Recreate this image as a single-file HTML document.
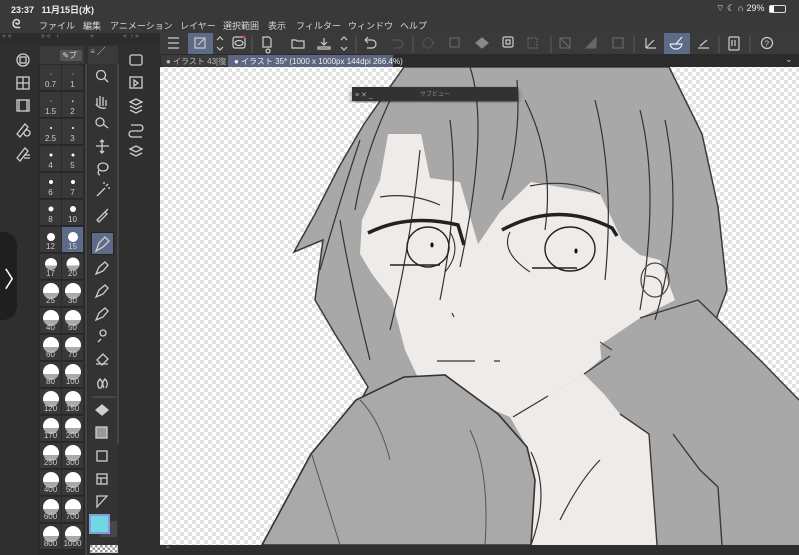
<!DOCTYPE html>
<html><head><meta charset="utf-8"><style>
*{margin:0;padding:0;box-sizing:border-box}
body{width:799px;height:555px;overflow:hidden;background:#2f2f2f;font-family:"Liberation Sans","Noto Sans CJK JP",sans-serif;color:#ddd;position:relative}
.a{position:absolute}
#status{left:0;top:0;width:799px;height:17px;background:#393939;font-size:9px;color:#eee}
#menu{left:0;top:17px;width:799px;height:16px;background:#393939;font-size:9px;color:#d8d8d8}
#menu span{position:absolute;top:2px}
#tb{left:160px;top:33px;width:639px;height:21px;background:#3a3a3a}
#tabs{left:160px;top:54px;width:639px;height:13px;background:#2b2b2b;font-size:8px}
.ph{top:33px;height:12px;background:#2c2c2c;font-size:7px;color:#888}
.r{position:absolute;left:40px;width:44px;height:27px;display:flex}
.c{position:relative;width:21px;height:26px;background:#383838;margin-right:1px;border-bottom:1px solid #262626}
.c i{position:absolute;left:50%;top:9px;transform:translate(-50%,-50%);background:#fff;border-radius:50%}
.c i.L{top:10px;background:linear-gradient(#fff 62%,#a9a9a9 62%)}
.c b{position:absolute;left:0;right:0;bottom:1px;text-align:center;font-size:8px;font-weight:normal;color:#ccc}
.sel{background:#5d6a88}
.ic{position:absolute;stroke:#cfcfcf;fill:none;stroke-width:1.3}
</style></head><body>

<div id="status" class="a">
<span class="a" style="left:11px;top:3px;font-weight:bold">23:37&nbsp;&nbsp;&nbsp;11月15日(水)</span>
<span class="a" style="left:716px;top:3px">⌔ ☾ ∩ 29%</span>
<div class="a" style="left:769px;top:5px;width:17px;height:8px;border:1px solid #ddd;border-radius:2px"><div style="width:4px;height:6px;background:#fff"></div></div>
</div>
<div id="menu" class="a">
<span style="left:12px;top:0;font-size:12px;font-weight:bold">ᘓ</span>
<span style="left:39px">ファイル</span><span style="left:83px">編集</span><span style="left:110px">アニメーション</span><span style="left:180px">レイヤー</span><span style="left:223px">選択範囲</span><span style="left:268px">表示</span><span style="left:296px">フィルター</span><span style="left:348px">ウィンドウ</span><span style="left:400px">ヘルプ</span>
</div>

<div class="a ph" style="left:0;width:38px">&nbsp;» «</div>
<div class="a ph" style="left:39px;width:48px">&nbsp;» «&nbsp;&nbsp;&nbsp;‹</div>
<div class="a ph" style="left:88px;width:32px">&nbsp;«</div>
<div class="a ph" style="left:121px;width:39px">&nbsp;«&nbsp;&nbsp;› »</div>
<div class="a" style="left:40px;top:46px;width:44px;height:18px;background:#3a3a3a"></div>
<div class="a" style="left:60px;top:50px;width:22px;height:11px;background:#555;font-size:8px;color:#ddd">&nbsp;✎ブ</div>
<div class="a" style="left:88px;top:46px;width:30px;height:18px;background:#3a3a3a;font-size:8px;color:#aaa">&nbsp;≡ <span style="color:#ddd">╱</span></div>

<svg class="ic" style="left:0;top:46px" width="38" height="120" viewBox="0 46 38 120">
<circle cx="23" cy="60" r="6"/><rect x="20" y="57" width="6" height="6"/>
<rect x="17" y="77" width="12" height="12"/><path d="M17 83h12M23 77v12"/>
<rect x="17" y="100" width="12" height="11"/><path d="M19 100v11M27 100v11"/>
<path d="M17 134l8-10 3 3-8 10zM24 133a3 3 0 1 0 6 0a3 3 0 1 0-6 0"/>
<path d="M17 158l8-10 3 3-8 10zM24 155h6M24 158h6"/>
</svg>
<div class="a" style="left:121px;top:46px;width:31px;height:509px;background:#2f2f2f"></div>
<svg class="ic" style="left:121px;top:46px" width="31" height="120" viewBox="121 46 31 120">
<rect x="130" y="55" width="12" height="10" rx="2"/>
<rect x="130" y="77" width="12" height="11"/><path d="M134 80l4 3-4 3z"/>
<path d="M130 102l6-3 6 3-6 3zM130 106l6 3 6-3M130 110l6 3 6-3"/>
<path d="M131 125h9a3 3 0 0 1 0 6h-8a3 3 0 0 0 0 6h10"/>
<path d="M130 149l6-3 6 3-6 3zM130 153l6 3 6-3"/>
</svg>

<div class="a" style="left:39px;top:64px;width:46px;height:491px;background:#2a2a2a"></div>
<div class="a" style="left:85px;top:64px;width:2px;height:491px;background:#444"></div>
<div class="r" style="top:65px"><div class="c"><i style="width:1px;height:1px"></i><b>0.7</b></div><div class="c"><i style="width:1px;height:1px"></i><b>1</b></div></div>
<div class="r" style="top:92px"><div class="c"><i style="width:1px;height:1px"></i><b>1.5</b></div><div class="c"><i style="width:1.5px;height:1.5px"></i><b>2</b></div></div>
<div class="r" style="top:119px"><div class="c"><i style="width:2px;height:2px"></i><b>2.5</b></div><div class="c"><i style="width:2px;height:2px"></i><b>3</b></div></div>
<div class="r" style="top:146px"><div class="c"><i style="width:3px;height:3px"></i><b>4</b></div><div class="c"><i style="width:3px;height:3px"></i><b>5</b></div></div>
<div class="r" style="top:173px"><div class="c"><i style="width:4px;height:4px"></i><b>6</b></div><div class="c"><i style="width:4px;height:4px"></i><b>7</b></div></div>
<div class="r" style="top:200px"><div class="c"><i style="width:5px;height:5px"></i><b>8</b></div><div class="c"><i style="width:6px;height:6px"></i><b>10</b></div></div>
<div class="r" style="top:227px"><div class="c"><i style="width:8px;height:8px;top:10px"></i><b>12</b></div><div class="c sel"><i style="width:10px;height:10px;top:10px"></i><b>15</b></div></div>
<div class="r" style="top:254px"><div class="c"><i class="L" style="width:12px;height:12px"></i><b>17</b></div><div class="c"><i class="L" style="width:13px;height:13px"></i><b>20</b></div></div>
<div class="r" style="top:281px"><div class="c"><i class="L" style="width:16px;height:16px"></i><b>25</b></div><div class="c"><i class="L" style="width:16px;height:16px"></i><b>30</b></div></div>
<div class="r" style="top:308px"><div class="c"><i class="L" style="width:16px;height:16px"></i><b>40</b></div><div class="c"><i class="L" style="width:16px;height:16px"></i><b>50</b></div></div>
<div class="r" style="top:335px"><div class="c"><i class="L" style="width:16px;height:16px"></i><b>60</b></div><div class="c"><i class="L" style="width:16px;height:16px"></i><b>70</b></div></div>
<div class="r" style="top:362px"><div class="c"><i class="L" style="width:16px;height:16px"></i><b>80</b></div><div class="c"><i class="L" style="width:16px;height:16px"></i><b>100</b></div></div>
<div class="r" style="top:389px"><div class="c"><i class="L" style="width:16px;height:16px"></i><b>120</b></div><div class="c"><i class="L" style="width:16px;height:16px"></i><b>150</b></div></div>
<div class="r" style="top:416px"><div class="c"><i class="L" style="width:16px;height:16px"></i><b>170</b></div><div class="c"><i class="L" style="width:16px;height:16px"></i><b>200</b></div></div>
<div class="r" style="top:443px"><div class="c"><i class="L" style="width:16px;height:16px"></i><b>250</b></div><div class="c"><i class="L" style="width:16px;height:16px"></i><b>300</b></div></div>
<div class="r" style="top:470px"><div class="c"><i class="L" style="width:16px;height:16px"></i><b>400</b></div><div class="c"><i class="L" style="width:16px;height:16px"></i><b>500</b></div></div>
<div class="r" style="top:497px"><div class="c"><i class="L" style="width:16px;height:16px"></i><b>600</b></div><div class="c"><i class="L" style="width:16px;height:16px"></i><b>700</b></div></div>
<div class="r" style="top:524px"><div class="c"><i class="L" style="width:16px;height:16px"></i><b>800</b></div><div class="c"><i class="L" style="width:16px;height:16px"></i><b>1000</b></div></div>

<div class="a" style="left:88px;top:64px;width:30px;height:491px;background:#333"></div>
<div class="a" style="left:117px;top:64px;width:2px;height:380px;background:#444"></div>
<div class="a" style="left:91px;top:232px;width:23px;height:23px;background:#5d6a88;border:1px solid #222"></div>
<svg class="ic" style="left:88px;top:64px" width="30" height="491" viewBox="88 64 30 491">
<circle cx="101" cy="75" r="4.5"/><path d="M104 78l4 4"/>
<path d="M97 106v-8M100 106v-10M103 106v-9M106 106v-6M96 104q3 5 10 4"/>
<circle cx="100" cy="122" r="4"/><path d="M103 124l5 4"/>
<path d="M102 140v13M96 146h13M100 142l2-2 2 2M100 151l2 2 2-2"/>
<ellipse cx="103" cy="167" rx="5" ry="4"/><path d="M99 170q-2 4 1 5"/>
<path d="M97 196l8-8M106 186l2-2M108 188l2 0M104 184v-2"/>
<path d="M97 220l8-8 2 2-8 8zM105 212l3-3"/>
<path d="M96 251l3-8 6-6 4 4-6 6z"/>
<path d="M96 274l3-7 6-5 3 3-5 6z"/>
<path d="M96 297l3-7 6-5 3 3-5 6z"/>
<path d="M96 320l3-7 6-5 3 3-5 6z"/>
<circle cx="103" cy="333" r="3"/><path d="M98 342l3-3"/>
<path d="M97 360l6-6 5 5-6 6zM96 364h12"/>
<path d="M99 388q-3-5 1-9 4 4 1 9zM104 388q-3-5 1-9 4 4 1 9"/>
<path d="M92 397h24" stroke="#555"/>
<path d="M96 410l6-5 6 5-6 5z" fill="#cfcfcf"/>
<rect x="96" y="427" width="11" height="11" fill="#999"/>
<rect x="97" y="451" width="10" height="10"/>
<rect x="97" y="474" width="10" height="10"/><path d="M97 478h10M101 478v6"/>
<path d="M97 507v-11l10 0z"/>
</svg>
<div class="a" style="left:100px;top:521px;width:17px;height:16px;background:#4a4550"></div>
<div class="a" style="left:89px;top:514px;width:21px;height:20px;background:#6fd8e4;border:2px solid #8a9ad8"></div>
<div class="a" style="left:90px;top:545px;width:28px;height:8px;background:repeating-conic-gradient(#fff 0 25%,#999 0 50%) 0 0/5px 5px"></div>

<div class="a" style="left:0;top:232px;width:17px;height:88px;background:#1f1f1f;border-radius:0 14px 14px 0"></div>
<div class="a" style="left:4px;top:262px;font-size:22px;color:#fff">〉</div>

<div id="tb" class="a"></div>
<div class="a" style="left:188px;top:33px;width:25px;height:21px;background:#5d6a88"></div>
<div class="a" style="left:664px;top:33px;width:26px;height:21px;background:#5d6a88"></div>
<svg class="a" style="left:160px;top:33px;stroke:#ccc;fill:none;stroke-width:1.2" width="639" height="21" viewBox="160 33 639 21">
<path d="M168 38h11M168 43h11M168 48h11"/>
<rect x="195" y="38" width="10" height="10"/><path d="M198 45l6-6"/>
<path d="M217 40l3-3 3 3M217 47l3 3 3-3"/>
<rect x="233" y="37" width="12" height="11" rx="2"/><ellipse cx="239" cy="43" rx="4" ry="2.5"/><circle cx="244" cy="37" r="1.5" fill="#e33" stroke="none"/>
<path d="M252 36v17M356 36v17M413 36v17M551 36v17M634 36v17M719 36v17M750 36v17" stroke="#555"/>
<path d="M263 37h6l2 2v8h-8zM268 49a2 2 0 1 0 0.1 0"/>
<path d="M292 40h4l1 1h7v7h-12z"/>
<path d="M318 47h12v2h-12zM324 38v7M321 42l3 3 3-3"/>
<path d="M341 40l3-3 3 3M341 47l3 3 3-3"/>
<path d="M365 40h7a4 4 0 0 1 0 8h-5M365 40l3-3M365 40l3 3"/>
<path d="M392 40h7a4 4 0 0 1 0 8h-5" stroke="#555"/>
<circle cx="428" cy="43" r="5" stroke="#666" stroke-dasharray="1.5 1.5"/>
<rect x="450" y="38" width="9" height="9" stroke="#666"/>
<path d="M476 43l6-5 6 5-6 5z" fill="#888" stroke="#888"/>
<rect x="503" y="37" width="10" height="10" rx="1.5"/><rect x="506" y="40" width="4" height="4"/>
<rect x="528" y="38" width="9" height="10" stroke="#666" stroke-dasharray="2 1"/>
<rect x="560" y="38" width="10" height="10" stroke="#666"/><path d="M560 38l10 10" stroke="#666"/>
<path d="M586 48l10-10v10z" fill="#666" stroke="#666"/>
<rect x="613" y="38" width="10" height="10" stroke="#666"/>
<path d="M646 48h10M646 48v-10M646 48l8-8"/>
<path d="M670 44h12q-1 5-6 5t-6-5M676 44l6-7" stroke="#eee"/>
<path d="M698 48h11M700 46l7-6"/>
<rect x="729" y="37" width="10" height="13" rx="1"/><path d="M732 40v6M735 40v6"/>
<circle cx="767" cy="43" r="5.5"/><text x="764.5" y="46.5" font-size="8" fill="#ccc" stroke="none">?</text>
</svg>

<div id="tabs" class="a">
<div class="a" style="left:1px;top:1px;width:67px;height:12px;background:#3c3c3c;color:#bbb;padding:1px 0 0 5px;white-space:nowrap;overflow:hidden">● イラスト 43[復</div>
<div class="a" style="left:68px;top:1px;width:165px;height:12px;background:#5d6680;color:#eee;padding:1px 0 0 6px;white-space:nowrap">● イラスト 35* (1000 x 1000px 144dpi 266.4%)</div>
<div class="a" style="left:625px;top:0;color:#ccc;font-size:9px">⌄</div>
</div>

<svg class="a" style="left:160px;top:67px" width="639" height="478" viewBox="160 67 639 478">
<defs><pattern id="ck" width="8" height="8" patternUnits="userSpaceOnUse"><rect width="8" height="8" fill="#fff"/><rect width="4" height="4" fill="#e2e2e2"/><rect x="4" y="4" width="4" height="4" fill="#e2e2e2"/></pattern>
<filter id="sh"><feDropShadow dx="0" dy="3" stdDeviation="3" flood-opacity="0.5"/></filter></defs>
<rect x="160" y="67" width="639" height="478" fill="url(#ck)"/>
<path d="M404 67L669 67L702 134L718 207L727 290L712 330L799 400L799 545L262 545L356 410L368 387L356 367L335 334L315 300L323 240L294 252L315 214L339 167L364 124Z" fill="#a8a8a8" stroke="#3a3a3a" stroke-width="1.5"/>
<path d="M388 134L421 134L430 178L460 182L478 244L500 212L531 182L600 194L622 240L640 255L660 260L675 300L640 318L620 345L600 360L584 374L548 396L510 417L470 400L420 382L405 350L392 300L372 274L360 254L362 220L380 180Z" fill="#efebe8"/>
<path d="M510 417L548 396L584 374L605 395L620 414L649 434L657 545L531 545L527 447Z" fill="#efebe8"/>
<path d="M600 345L640 318L698 300L760 360L799 400L799 545L657 545L649 434L620 414L605 395Z" fill="#a8a8a8"/>
<path d="M640 318L698 300L760 360L799 400M620 414L649 434L657 545M673 434L700 470L718 487L722 545" stroke="#3a3a3a" stroke-width="1.4" fill="none"/>
<path d="M262 545L311 454L356 400L404 377L445 375L498 414L527 447L535 480L531 545Z" fill="#a9a9a9" stroke="#333" stroke-width="1.6"/>
<path d="M312 455L340 545M360 400q20 20 30 60M470 430q20 40 15 115" stroke="#555" fill="none" stroke-width="1"/>
<g stroke="#333" fill="none" stroke-width="1.2">
<path d="M513 417L548 396M584 374L610 356M531 452q20 40 0 93M560 520q20-40 40-60"/>
<path d="M530 186q40-8 70 8M380 197q30-5 60 8M470 67q20 60 -10 200M517 80q5 60-15 120M525 100q30 60 20 130M450 120q10 80 -10 180M595 100q20 80 10 180M640 110q20 80 0 200M665 120q20 100 -10 200M420 150q-10 100 -30 180M360 140q-20 60-40 130M340 220q10 60 30 140M395 90q-30 60-40 120"/>
<path d="M437 361h38M494 361h6"/>
<path d="M452 313l2 4"/>
</g>
<g stroke="#222" fill="none">
<path d="M368 233q40-20 90 -8l6 20" stroke-width="3.5"/>
<path d="M502 230q55-30 110 -2l5 8" stroke-width="3.5"/>
<path d="M390 265h50M532 268h45" stroke-width="1.5"/>
<ellipse cx="428" cy="247" rx="21" ry="20" stroke-width="1.4"/>
<ellipse cx="570" cy="249" rx="25" ry="22" stroke-width="1.4"/>
<path d="M450 232q12 20-5 40M510 232q-10 20 20 40" stroke-width="1"/>
</g>
<ellipse cx="432" cy="245" rx="1.6" ry="2.5" fill="#111"/>
<ellipse cx="576" cy="251" rx="1.6" ry="2.5" fill="#111"/>
<g stroke="#444" fill="none" stroke-width="1.2"><ellipse cx="655" cy="280" rx="14" ry="17"/><path d="M600 342l12 8M646 276q20 0 15 20"/></g>
<rect x="352" y="87" width="166" height="14" fill="#333" filter="url(#sh)"/>
<text x="355" y="97" font-size="7" fill="#aaa">≡ ✕ _</text>
<text x="420" y="96" font-size="6" fill="#888" font-family="Liberation Sans, Noto Sans CJK JP, sans-serif">サブビュー</text>
</svg>
<div class="a" style="left:160px;top:545px;width:639px;height:10px;background:#2e2e2e;font-size:8px;color:#999">&nbsp;&nbsp;⌃</div>
</body></html>
